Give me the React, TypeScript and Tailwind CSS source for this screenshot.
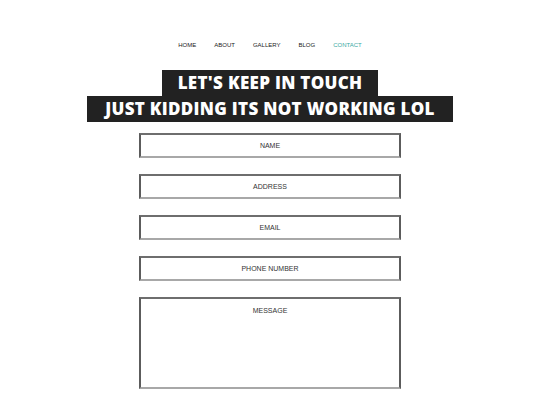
// Contact page: nav, stacked banner heading, placeholder form

const links = ['HOME', 'ABOUT', 'GALLERY', 'BLOG', 'CONTACT'];
const fields = ['NAME', 'ADDRESS', 'EMAIL', 'PHONE NUMBER'];

export default function App() {
  return (
    <div className="w-[540px] h-[405px] bg-white overflow-hidden font-['Liberation_Sans',Arial,sans-serif]">
      <nav className="flex justify-center gap-[18px] pt-[41px]">
        {links.map((l) => (
          <a key={l} className={l === 'CONTACT' ? 'text-[6px] leading-[8px] text-[#3aa9a3]' : 'text-[6px] leading-[8px] text-[#222]'}>{l}</a>
        ))}
      </nav>

      <div className="flex flex-col items-center mt-[21px] font-['Open_Sans',sans-serif] font-extrabold text-white">
        <h1 className="bg-[#222] px-[16px] h-[26px] leading-[26px] text-[17px] tracking-[0.3px]">LET'S KEEP IN TOUCH</h1>
        <h2 className="bg-[#222] px-[18px] h-[26px] leading-[26px] text-[17px] tracking-[0.3px]">JUST KIDDING ITS NOT WORKING LOL</h2>
      </div>

      <form className="flex flex-col items-center gap-[16px] mt-[11px]">
        {fields.map((f) => (
          <input key={f} placeholder={f} className="w-[262px] h-[25px] border-2 border-[#5c5c5c] border-t-[#6e6e6e] border-b-[#a8a8a8] text-center text-[7px] placeholder:text-[#333] outline-none" />
        ))}
        <textarea placeholder="MESSAGE" className="w-[262px] h-[92px] border-2 border-[#5c5c5c] border-t-[#6e6e6e] border-b-[#a8a8a8] text-center text-[7px] pt-[7px] placeholder:text-[#333] resize-none outline-none" />
      </form>
    </div>
  );
}
